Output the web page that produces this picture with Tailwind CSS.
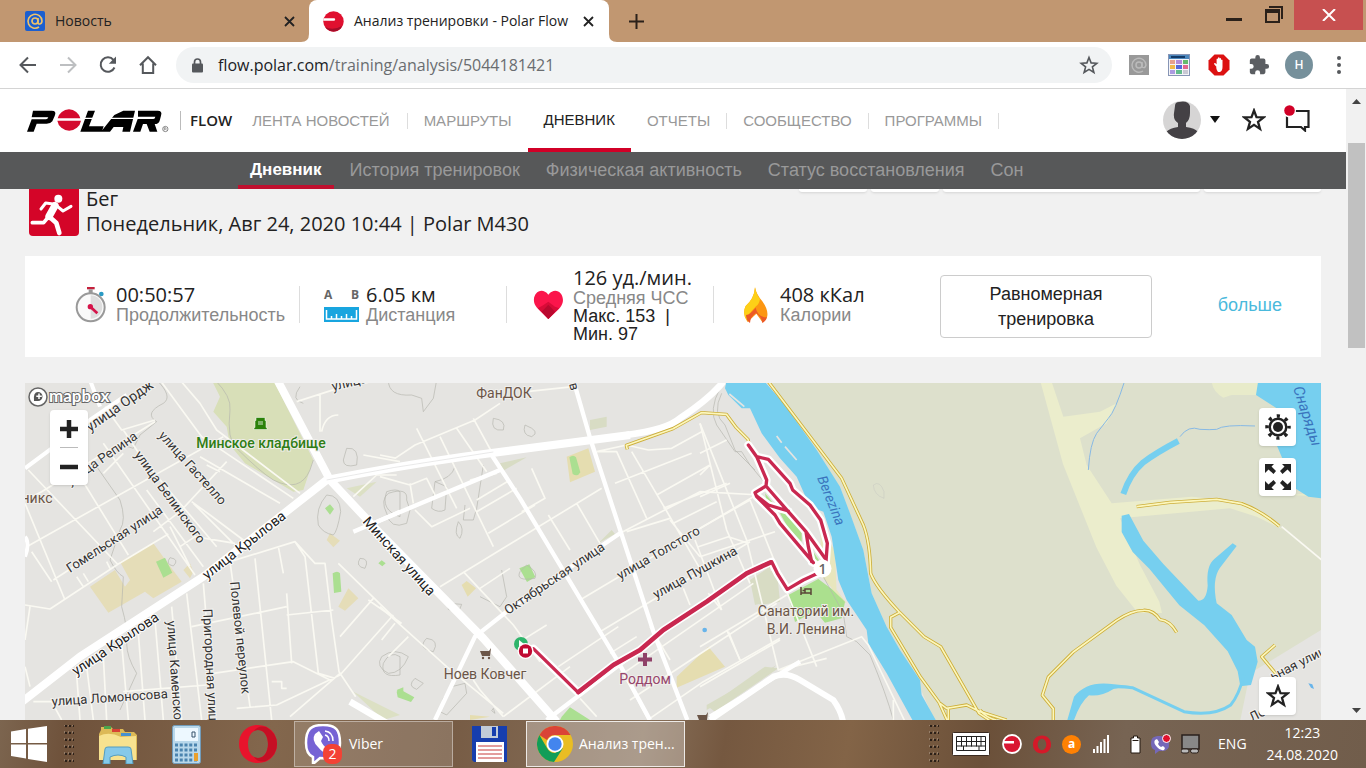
<!DOCTYPE html>
<html lang="ru">
<head>
<meta charset="utf-8">
<title>Анализ тренировки - Polar Flow</title>
<script src="https://cdn.jsdelivr.net/npm/@tailwindcss/browser@4"></script>
</head>
<body class="flex h-screen flex-col overflow-hidden bg-[#f1f1f1] font-['Liberation_Sans',sans-serif] text-[#222]">

<!-- Tab strip -->
<div class="flex h-[42px] shrink-0 items-stretch bg-[#c19771] font-['Open_Sans',sans-serif] text-sm">
  <div class="flex w-[309px] items-center pr-[10px] pl-[25px]">
    <svg class="h-5 w-5" viewBox="0 0 20 20"><rect width="20" height="20" rx="2" fill="#1b5fd0"/><circle cx="10" cy="10" r="3" fill="none" stroke="#eec26a" stroke-width="1.7"/><path d="M13 7v4.500q.3 1.800 1.800 1.500Q17 12.400 17 10A7 7 0 1 0 14 16" fill="none" stroke="#eec26a" stroke-width="1.600"/></svg>
    <span class="ml-[10px] grow">Новость</span>
    <button aria-label="Закрыть вкладку" class="p-1"><svg class="h-[11px] w-[11px]" viewBox="0 0 11 11"><path d="M1 1l9 9M10 1l-9 9" stroke="#222" stroke-width="1.800"/></svg></button>
  </div>
  <div class="relative flex w-[300px] items-center rounded-t-lg bg-white pr-[11px] pl-[14px]">
    <svg class="absolute bottom-0 -left-2 h-2 w-2" viewBox="0 0 8 8"><path d="M8 0v8H0q8 0 8-8z" fill="#fff"/></svg>
    <svg class="absolute -right-2 bottom-0 h-2 w-2" viewBox="0 0 8 8"><path d="M0 0v8h8Q0 8 0 0z" fill="#fff"/></svg>
    <svg class="h-[21px] w-[21px]" viewBox="0 0 21 21"><circle cx="10.500" cy="10.500" r="10.200" fill="#e0102f"/><path d="M2 16Q10 20 19 15L18 17A10 10 0 0 1 3 17z" fill="#a30d29"/><path d="M.5 7.300h11q1.500.8 0 2.400H.4z" fill="#fff"/></svg>
    <span class="ml-[10px] grow whitespace-nowrap">Анализ тренировки - Polar Flow</span>
    <button aria-label="Закрыть вкладку" class="p-1"><svg class="h-[11px] w-[11px]" viewBox="0 0 11 11"><path d="M1 1l9 9M10 1l-9 9" stroke="#222" stroke-width="1.800"/></svg></button>
  </div>
  <button aria-label="Новая вкладка" class="px-5"><svg class="h-[15px] w-[15px]" viewBox="0 0 15 15"><path d="M7.500 0v15M0 7.500h15" stroke="#2b211a" stroke-width="2"/></svg></button>
  <div class="ml-auto flex items-start pr-[3px]">
    <button aria-label="Свернуть" class="h-[30px] px-3"><svg class="h-4 w-4" viewBox="0 0 16 16"><path d="M0 11h16v3H0z" fill="#2b211a"/></svg></button>
    <button aria-label="Восстановить" class="h-[30px] px-[11px]"><svg class="h-[18px] w-[18px]" viewBox="0 0 18 18"><path d="M4 1h13v12" fill="none" stroke="#2b211a" stroke-width="2"/><path d="M1 4h13v12H1z" fill="none" stroke="#2b211a" stroke-width="2"/><path d="M0 3h15v4H0z" fill="#2b211a"/></svg></button>
    <button aria-label="Закрыть" class="flex h-[30px] w-[69px] items-center justify-center bg-[#c75050]"><svg class="h-3 w-[14px]" viewBox="0 0 14 12"><path d="M1 0l12 12M13 0L1 12" stroke="#fff" stroke-width="2"/></svg></button>
  </div>
</div>

<!-- Address bar -->
<div class="flex h-[46px] shrink-0 items-center bg-white pr-[25px] pl-[18px]">
  <button aria-label="Назад" class="mr-5"><svg class="h-5 w-5" viewBox="0 0 20 20"><path d="M18 10H3M10 2.500L2.500 10l7.500 7.500" fill="none" stroke="#55585c" stroke-width="2"/></svg></button>
  <button aria-label="Вперёд" class="mr-5"><svg class="h-5 w-5" viewBox="0 0 20 20"><path d="M2 10h15M10 2.500l7.500 7.500-7.500 7.500" fill="none" stroke="#bdbfc1" stroke-width="2"/></svg></button>
  <button aria-label="Обновить" class="mr-5"><svg class="h-5 w-5" viewBox="0 0 20 20"><path d="M16.500 12.500A7.200 7.200 0 1 1 15.500 5" fill="none" stroke="#55585c" stroke-width="2"/><path d="M18 1.500v7.200h-7.200z" fill="#55585c"/></svg></button>
  <button aria-label="Домой" class="mr-[18px]"><svg class="h-5 w-5" viewBox="0 0 20 20"><path d="M2 10.200l8-8 8 8M4.800 8.500V18h10.400V8.500" fill="none" stroke="#55585c" stroke-width="2"/></svg></button>
  <div class="flex h-9 grow items-center rounded-full bg-[#f1f3f4] pr-[13px] pl-4">
    <svg class="mr-[15px] h-[15px] w-[11px]" viewBox="0 0 11 15"><rect y="5.500" width="11" height="9" rx="1" fill="#55585c"/><path d="M2.500 6V4a3 3 0 0 1 6 0v2" fill="none" stroke="#55585c" stroke-width="1.700"/></svg>
    <div class="grow font-['Open_Sans',sans-serif] text-base text-[#6a6d70]"><span class="text-[#202124]">flow.polar.com</span>/training/analysis/5044181421</div>
    <button aria-label="Добавить в закладки"><svg class="h-5 w-5" viewBox="0 0 20 20"><path d="M10 2.500l2.100 5.400 5.700.4-4.400 3.600 1.500 5.600-4.900-3.100-4.900 3.100 1.500-5.600L2.200 8.300l5.700-.4z" fill="none" stroke="#55585c" stroke-width="1.600"/></svg></button>
  </div>
  <button aria-label="Mail.ru" class="ml-4"><svg class="h-[22px] w-[22px]" viewBox="0 0 22 22"><rect x="1" y="1" width="20" height="20" fill="#999"/><circle cx="11" cy="11" r="3" fill="none" stroke="#bbb" stroke-width="1.500"/><path d="M14 8v5q3 2 4-2A7 7 0 1 0 15 17" fill="none" stroke="#bbb" stroke-width="1.400"/></svg></button>
  <button aria-label="Календарь" class="ml-[18px]"><svg class="h-[22px] w-[22px]" viewBox="0 0 22 22"><rect x=".5" y=".5" width="21" height="21" fill="#f4f4f8" stroke="#8795b5"/><path d="M1 1h20v4H1z" fill="#4b87bd"/><path d="M3 2h14v2H3z" fill="#123a68"/><path d="M2 6h5v4H2z" fill="#e6a08c"/><path d="M8 6h6v4H8z" fill="#b28bd8"/><path d="M15 6h5v4h-5z" fill="#63bc6c"/><path d="M2 11h5v4H2z" fill="#f0b94a"/><path d="M8 11h6v4H8z" fill="#5468d8"/><path d="M15 11h5v4h-5z" fill="#e2678f"/><path d="M2 16h5v4H2z" fill="#ac9ae0"/><path d="M8 16h6v4H8z" fill="#63bc8c"/><path d="M15 16h5v4h-5z" fill="#c9c9d4"/></svg></button>
  <button aria-label="AdBlock" class="ml-[18px]"><svg class="h-[22px] w-[22px]" viewBox="0 0 22 22"><path d="M6.500.5h9l6 6v9l-6 6h-9l-6-6v-9z" fill="#dc1212"/><path d="M9 13.500L6 10q.2-1.500 1.500-.8L8.600 10.300V5q.7-1 1.400 0v4V3.800q.8-1 1.500 0V9V4.500q.8-1 1.500 0V9.500V6q.8-1 1.500 0v7q0 4-2.500 5H10Q8.500 16 8 13z" fill="#fff"/></svg></button>
  <button aria-label="Расширения" class="ml-[18px]"><svg class="h-[22px] w-[22px]" viewBox="0 0 24 24"><path d="M20.500 11H19V7a2 2 0 0 0-2-2h-4V3.500a2.500 2.500 0 0 0-5 0V5H4a2 2 0 0 0-2 2v3.800h1.500a2.700 2.700 0 0 1 0 5.400H2V20a2 2 0 0 0 2 2h3.800v-1.500a2.700 2.700 0 0 1 5.400 0V22H17a2 2 0 0 0 2-2v-4h1.500a2.500 2.500 0 0 0 0-5z" fill="#5b5e62"/></svg></button>
  <button class="ml-[15px] h-7 w-7 rounded-full bg-[#76909b] font-['Open_Sans',sans-serif] text-xs font-semibold text-white">Н</button>
  <button aria-label="Меню" class="ml-6"><svg class="h-[18px] w-1" viewBox="0 0 4 18"><circle cx="2" cy="2" r="2" fill="#55585c"/><circle cx="2" cy="9" r="2" fill="#55585c"/><circle cx="2" cy="16" r="2" fill="#55585c"/></svg></button>
</div>

<!-- Page with its scroll bar -->
<div class="flex min-h-0 grow border-t border-[#d4d4d4]">
 <div class="flex min-w-0 grow flex-col">
  <header class="flex h-[63px] shrink-0 items-center bg-white pl-[27px]">
    <a href="#" aria-label="Polar" class="mr-[10px] shrink-0"><svg class="h-6 w-[143px]" viewBox="0 0 429 72">
      <path d="M18 5H74Q90 5 83 21L76 37Q71 44 59 44H29L20 68H0L14 31H57Q62 31 64 25H14z"/>
      <path d="M183 5h21l-18 47h44l-6 16h-64zM289 5h35l-15 63h-23l3-14h-29l-11 14h-27l40-50zM333 5h59q15 0 10 15l-4 15q-3 10-15 10l8 23h-23l-9-23h-11l-8 23h-22l14-38h47q5 0 6-7h-52z"/>
      <path d="M126 1a36 35 0 0 1 34 27H92A36 35 0 0 1 126 1zM91 35h71a36 36 0 0 1-71 0z" fill="#d40a2d"/>
      <path d="M8 26h52v4H8zM172 26h35v4h-35zM234 26h90v4h-90zM324 26h52v4h-52z" fill="#fff"/>
      <circle cx="415" cy="60" r="8" fill="none" stroke="#555" stroke-width="2"/><path d="M412 64v-8h4q3 2 0 4h-4M416 60l2 4" fill="none" stroke="#555" stroke-width="1.500"/>
    </svg></a>
    <a href="#" class="mr-5 border-l border-[#bbb] pl-[9px] font-['Open_Sans',sans-serif] text-[15px] leading-[19px] font-semibold">FLOW</a>
    <nav class="flex h-full items-center text-[15px] text-[#999]">
      <a href="#" class="pr-[17px] leading-4 whitespace-nowrap">ЛЕНТА НОВОСТЕЙ</a>
      <a href="#" class="border-l border-[#ddd] px-4 leading-4">МАРШРУТЫ</a>
      <a href="#" class="flex h-full items-center border-b-4 border-[#d10027] px-4 pt-1 text-[#222]">ДНЕВНИК</a>
      <a href="#" class="border-r border-[#ddd] px-4 leading-4">ОТЧЕТЫ</a>
      <a href="#" class="px-4 leading-4">СООБЩЕСТВО</a>
      <a href="#" class="border-x border-[#ddd] px-4 leading-4">ПРОГРАММЫ</a>
    </nav>
    <div class="ml-auto flex items-center pr-9 pb-[2px]">
      <button aria-label="Профиль" class="flex items-center"><svg class="h-[38px] w-[38px] rounded-full" viewBox="0 0 38 38"><rect width="38" height="38" fill="#d6d5d5"/><path d="M12 5q0-4 4-4 9-2 11 4v7q0 7-4 10v4q9 1 12 5v7H3v-7q4-4 12-5v-4Q10 19 11 12z" fill="#444145"/></svg><svg class="ml-[9px] h-[7px] w-[10px]" viewBox="0 0 10 7"><path d="M0 0h10L5 7z" fill="#111"/></svg></button>
      <button aria-label="Избранное" class="ml-[22px]"><svg class="h-6 w-6" viewBox="0 0 24 24"><path d="M12 2.500l2.500 6.700 7.200.2-5.700 4.500 2 7-6-4-6 4 2-7L2.300 9.400l7.200-.2z" fill="none" stroke="#222" stroke-width="2.300"/></svg></button>
      <button aria-label="Уведомления" class="ml-[18px] pb-1"><svg class="h-[28px] w-[26px]" viewBox="0 0 26 28"><path d="M3 7h21.500v16H21v3.500L17 23H3z" fill="none" stroke="#222" stroke-width="2.200"/><circle cx="5.500" cy="7" r="6.500" fill="#fff"/><circle cx="5.500" cy="6.500" r="5.300" fill="#d10027"/></svg></button>
    </div>
  </header>
  <nav class="flex h-[37px] shrink-0 items-stretch bg-[#575859] pl-[238px] text-lg leading-8 text-[#999]">
    <a href="#" class="mr-[3px] border-b-4 border-[#c0102f] px-3 pt-[2px] text-[17px] leading-8 font-bold text-white">Дневник</a>
    <a href="#" class="px-[13px] pt-[2px] whitespace-nowrap">История тренировок</a>
    <a href="#" class="px-[13px] pt-[2px] whitespace-nowrap">Физическая активность</a>
    <a href="#" class="px-[13px] pt-[2px] whitespace-nowrap">Статус восстановления</a>
    <a href="#" class="px-[13px] pt-[2px]">Сон</a>
  </nav>
  <main class="flex min-h-0 grow flex-col px-[25px]">
    <div class="flex h-[67px] shrink-0 items-start pl-1">
      <svg class="h-[47px] w-[50px] shrink-0 rounded-b-[4px]" viewBox="0 0 150 141"><rect width="150" height="141" fill="#d40528"/><circle cx="88" cy="29" r="12" fill="#fff"/><g fill="none" stroke="#fff" stroke-linecap="round" stroke-linejoin="round"><path d="M36 60l14-18 28 4 24 20 24-14" stroke-width="9"/><path d="M78 50L60 82" stroke-width="22"/><path d="M62 84l20 18 9 30" stroke-width="14"/><path d="M58 84l-14 17H10" stroke-width="11"/></g></svg>
      <h1 class="-mt-[3px] ml-[7px] font-['Open_Sans',sans-serif] text-xl leading-[25px] whitespace-nowrap">Бег<br>Понедельник, Авг 24, 2020 10:44 | Polar M430</h1>
      <div class="ml-auto flex gap-1">
        <div class="h-[3px] w-[68px] rounded-b bg-white shadow-sm"></div>
        <div class="h-[3px] w-[68px] rounded-b bg-white shadow-sm"></div>
        <div class="h-[3px] w-[257px] rounded-b bg-white shadow-sm"></div>
        <div class="h-[3px] w-[117px] rounded-b bg-white shadow-sm"></div>
      </div>
    </div>
    <section class="flex h-[101px] shrink-0 items-center bg-white pb-1 pl-[50px] text-lg leading-5">
      <div class="flex h-[37px] w-[225px] items-center border-r border-[#ddd]">
        <svg class="h-[38px] w-[32px]" viewBox="0 0 96 114"><path d="M36 3h23v7H36z" fill="#c4213c"/><path d="M41 10h12v12H41z" fill="#999"/><circle cx="79" cy="24" r="7" fill="#2a9ac4"/><circle cx="47" cy="64" r="42" fill="#fafafa" stroke="#999" stroke-width="6"/><path d="M47 28a35 35 0 0 1 0 70z" fill="#dedede"/><circle cx="46" cy="62" r="8" fill="#d5144a"/><path d="M46 62l21 20" stroke="#d5144a" stroke-width="8"/></svg>
        <div class="ml-[9px]"><b class="block font-['Open_Sans',sans-serif] text-xl leading-5 font-medium">00:50:57</b><span class="block text-[#888]">Продолжительность</span></div>
      </div>
      <div class="flex h-[37px] w-[207px] items-center border-r border-[#ddd] pl-6">
        <div class="w-[35px] font-['Open_Sans',sans-serif] text-xs leading-4 font-bold text-[#666]"><div class="flex justify-between"><span>A</span><span>B</span></div><svg class="mt-1 h-[15px] w-[35px]" viewBox="0 0 35 15"><rect width="35" height="15" fill="#18a5df"/><path d="M2.500 3v9h30V3M7.500 12V9m5 3V7m5 5V9m5 3V7m5 5V9" fill="none" stroke="#fff" stroke-width="1.500"/></svg></div>
        <div class="ml-[7px]"><b class="block font-['Open_Sans',sans-serif] text-xl leading-5 font-medium">6.05 км</b><span class="block text-[#888]">Дистанция</span></div>
      </div>
      <div class="flex h-[37px] w-[207px] items-center border-r border-[#ddd] pl-[26px]">
        <svg class="h-[29px] w-[31px] shrink-0" viewBox="0 0 93 87"><path d="M46 87L12 53C-14 24 20-18 46 14 73-18 106 24 81 53z" fill="#fb154b"/><path d="M46 87L14 55l14-8 18-12 20 15 13 5z" fill="#d90b38"/><path d="M46 87L26 65l20-21 20 21z" fill="#b9092f"/></svg>
        <div class="ml-[9px] leading-[18px]"><b class="block font-['Open_Sans',sans-serif] text-xl leading-[22px] font-medium whitespace-nowrap">126 уд./мин.</b><span class="block text-[#888]">Средняя ЧСС</span>Макс. 153 &nbsp;|<br>Мин. 97</div>
      </div>
      <div class="flex h-[37px] w-[226px] items-center pl-[29px]">
        <svg class="h-[36px] w-[27px]" viewBox="0 0 81 108"><path d="M36 1q4 22 22 42 20 28 14 48-4 11-14 14L40 80 14 105Q-4 82 8 57 34 35 36 1z" fill="#fc9612"/><path d="M36 1q4 22 15 35-2 15-12 22-15 14-27 34l2 13Q-4 82 8 57 34 35 36 1z" fill="#fdd017"/><path d="M38 62q-16 20-29 22 0 16 12 24 0-17 18-30 17 12 19 30 10-4 14-17-28 0-34-29z" fill="#ec5a26"/></svg>
        <div class="ml-[10px]"><b class="block font-['Open_Sans',sans-serif] text-xl leading-5 font-medium">408 кКал</b><span class="block text-[#888]">Калории</span></div>
      </div>
      <button class="mt-1 h-[63px] w-[212px] rounded border border-[#ccc] px-10 leading-[25px]">Равномерная тренировка</button>
      <a href="#" class="mr-[39px] ml-auto text-[#4ab9dc]">больше</a>
    </section>

    <section aria-label="Карта" class="relative mt-[26px] min-h-0 grow overflow-hidden bg-[#e5e4e1]">
      <svg class="h-full w-full" viewBox="25 383 1296 337" preserveAspectRatio="xMinYMin slice">
       <g transform="scale(.333333)" fill="none" stroke-linejoin="round">
        <!-- north-west: parks and yards -->
        <g transform="translate(0 1140)">
          <path d="M635 0H820L940 240L910 330L880 335L735 250L690 195L680 140L640 95L660 50z" fill="#d8dfb8"/>
          <path d="M270 620L345 570L375 620L390 600L360 545L460 490L500 545L545 605L460 655L435 635L325 698z" fill="#e5ddb8"/>
          <path d="M468 545l27-12 22 45-27 15zM998 580q15-10 22 0l4 55-22 4zM975 385l15-12 12 14-12 17zM1135 550l10-9 12 9-10 9zM1190 930l20-8v30z" fill="#abdf91"/>
          <path d="M980 480l10-20 30 22-20 20zM1015 680l30-55 30 30-40 37zM550 570l20-20 10 25-10 20z" fill="#e5ddb8"/>
          <path d="M1040 325l90-20-50 45zM1060 935l140 70-50 15z" fill="#dce0c4"/>
        </g>
        <g transform="translate(1140 1140)">
          <path d="M560 230l65-25 20 70-75 32zM890 890l95-90 50 60-145 63zM245 615l15-12 28 22-25 25zM270 1005l60 5-60 10z" fill="#e5ddb0"/>
          <path d="M568 232q12-10 20 0l13 45q-8 15-23 5zM418 565l30-12 18 38-25 15zM50 935l8-8 45 25-10 14-40-14zM545 1010l25-28 60 38h-90z" fill="#abdf91"/>
          <path d="M360 250l80-18-70 40zM655 490l40-40 10 12zM1110 605l80-40 10 100-60 10zM985 980l170-120 40 5-190 130zM630 120l50-10v30l-50 10z" fill="#d8dcc4"/>
        </g>
        <!-- river and the eastern bank -->
        <g transform="translate(2100 1140)">
          <path d="M205 0L1863 0V1025H705L650 900L560 740L515 640L490 510L420 320L330 200z" fill="#dde0cc"/>
          <path d="M360 430l45 85 5 125-45-50zM380 590l60 80-30-10z" fill="#e8e6bd"/>
          <path d="M265 645l90-48 40 30 40 38-10 50-50 13-30-35-60 33z" fill="#abe08e"/>
          <path d="M195 340l25 30-20-5zM240 400q20-5 30 10l35 50v25l-40-40zM340 515l20 30-15-5z" fill="#abe08e"/>
          <path d="M150 600l60-40 15 100-60 15zM20 975l210-120-40 35-170 100z" fill="#d8dcc4"/>
          <path d="M80 0H190L255 75L350 210L420 320L450 400L490 510L515 640L560 740L600 810L660 900L665 945L710 1025H640L560 880L505 790L500 750L440 660L415 600L395 470L370 395L330 380L290 290L240 235L185 160L150 85L125 85L85 45L75 25z" fill="#76cfef"/>
          <path d="M88 42l45 38M230 168l15 20M255 200l35 40" stroke="#e5e4e1" stroke-width="5"/>
          <circle cx="14" cy="750" r="7" fill="#68b4ea"/>
          <path d="M520 315q20-15 32 20v20q-30-10-32-40z" stroke="#bbb"/>
        </g>
        <g transform="translate(2940 1140)">
          <path d="M180 0h33l37 110 110-15 50-25-30 60-80 45 20 80 75 115 240-20 155 15 60 40 60 45-80-40-80-25-330 30 60 140 58 110 8 34h-72l-65-82-60-115-100-250z" fill="#ebedcc"/>
          <path d="M695 0h140v45h-80l-25 8q-35-20-35-53zM935 345l88-10v15z" fill="#e8ebca"/>
          <path d="M835 0h190v355l-40-5-40-25-55-130v-110l-62-40z" fill="#76cfef"/>
          <path d="M1023 750L810 880 780 1025h243z" fill="#e5e4e1"/>
          <path d="M325 270q5-80 25-110l35-45q20-20 50-115M600 170q25-35 60-22 30 2 50 0 20-15 115-10" stroke="#87b9e5" stroke-width="3"/>
          <path d="M430 342q20-60 60-95 40-30 105-64" stroke="#76cfef" stroke-width="18"/>
          <path d="M425 407l22-5 43 80 60 70 105 110q25 0 28-45-5-60 20-80l55-47 12 8-50 65q-25 35-10 107l45 35 45 75 25 20 8 45-20 70-32 4-8-45-30-60-70-78-75-60-90-110-50-50-33-60z" fill="#76cfef"/>
          <path d="M792 885q-15 60-40 90-50 35-140 20l-155-72q-100-10-145 22-30 30-40 75" stroke="#76cfef" stroke-width="9"/>
          <path d="M262 1020l20-70q40-50 120-37l50 5-50 8q-40 25-75 20-25 20-45 74z" fill="#76cfef"/>
          <path d="M985 910l12 3 5 14-9-4z" fill="#68b4ea"/>
        </g>

        <!-- thin outlines -->
        <g stroke="#b5b5ae" stroke-width="2">
          <path transform="translate(0 1140)" d="M470 0q50 50 20 70-60 30-20 55l-50 40-20 40-50-15M645 0q50 50 45 90-10 90 20 115 70 70 110 95 80 40 110-30l10-30M290 260l70 100q20 60 0 90l-30 90q20 40 40 50l-5 90q20 70 15 110 0 40 30 90l-50 110M980 345q40 0 42 50-10 60-22 70-30-5-45-30-10-50 25-90zM1040 205q40-5 30 50-40 10-40-15zM1080 535q30 0 15 30-30-5-15-30zM900 20q-30 40 10 50M510 533q30 5 10 25-25-5-10-25zM1160 335q30-10 40 0v75q-60-20-40-75zM1150 850q20-40 50-20v55q-60 10-50-35z"/>
          <path transform="translate(1140 1140)" d="M25 0q0 50 70 45l30 10 5 40 30-40 10-55M340 115q40 5 30 35-40 5-30-35zM435 135q50 20 20 35-30-5-20-35zM25 340q60-20 55 20l10 30-10 40q-50 20-60-30-20-40 5-60zM165 305q50-10 60-45M165 305l35 15-5 70q-20 10-40-5zM310 255l-20 130-10 35h-30l5-45M235 425q20 20 5 50-20-10-5-50zM440 555q35 20 25 40-60 10-45-20zM365 570l15 80-20 30-60-30M5 830q40-30 80 0-20 50-60 50-40-20-20-50zM140 775q40 5 20 40-50-10-20-40zM205 670l40 3-10 25-30-10zM215 920l40-10 5 30-60 65-20-10 10-40zM105 895l25 15-20 18q-30-10-5-33zM340 985l5 15-10-8zM1025 40q-30 60 10 95l30 75 60 60"/>
          <path transform="translate(2100 1140)" d="M60 25q-35 65-10 110l55 80h20l25 40 50 60M370 590l60 110 10 70 30 15 40 40q50 120 70 195"/>
        </g>

        <!-- minor streets -->
        <g stroke="#faf9f2" stroke-width="5">
          <path transform="translate(0 1140)" d="M315 80l50 70 100-30M480 0l125 170 275 185M540 0l60 70 50 80 250 190M465 125l-340 210-50 25M80 500l590-330M160 600l200-130M75 675l75 12 205-135 150-90M85 270l270 285M200 225l185 300M310 190l275 395M370 150l60 90 220 260M75 370l120 290M95 515l60 90M600 230l240 140M620 255l40 20M680 245l-140 150-80 60M580 370l120 120M440 330l170 230M540 500l45-30 120 20M575 365l55 40 120 90M230 590l20 30M250 580l15 25M320 545l10 20M90 680l-15 100M75 860l15 60M690 545l195-60 60 65h30l20 170 22 155 50 75M885 485l30 45 40 350 50 15M690 545l60 435M765 535l50 485M835 500l15 80M860 640l15 210M610 610l15 180M560 640l45 380M515 680l30 340M465 720l25 300M415 760l20 260M365 790l20 230M310 830l10 190M260 860l20 160M230 885l10 135M575 740l285-60M860 705l140-15M640 880l240-35 110 55M710 985l120-10 190-90 160-180M100 965h55l30 55M1015 550l185 180M1020 770l100-115M1105 660l100 70M890 65l170-55M960 40v115M965 155q10-50 50-50M1090 225l110 20M1060 350l70-65h60M870 1010l150-130M815 905h30v20h15M370 935l250-20M510 440l60 120M370 220l-60 60"/>
          <path transform="translate(1140 1140)" d="M45 235l60-40 180-75 75-50M440 35l140-15M110 145l120 240M180 170l160 330M230 145l90 130M280 115l60 110M0 290l90 25 50-20 30 60M90 310l10 60M0 225l50 10M105 390l50 50 115-55M270 300l80-20M290 360l100-60M290 395l120-70M325 460l140-85M180 620l485-295M455 265l40 90-70 40M505 405l65 105M590 370l70 120M650 215h60l90 200M650 215l90-20 65 15 70-5 90-50M755 215l100 170 110 190M705 310l230-90M830 345l160-90M850 385l190-75M880 430l130-65M960 130l80 320 70 160M720 460l240-125 180 10M740 455l130-40M600 660l520-310M955 500l90-30 60 20M660 755l450-270M690 820l80-50M535 860l180-120M370 1010l200-150M250 575l150 160 80 110M300 625l90-60M945 480l80 210M910 625l20 50M1000 635l25 55M1040 750l40 90M870 420l90 110M0 680l200 180 170 140M45 730l-40 50M85 770l-60 60M750 910l-20-30 390-270M750 960l440-290M810 1015l160-110 230-130M280 900l20 30 70 80M600 955l50 55M715 850l90 170M810 740l60 100M500 735l-80 50"/>
          <path transform="translate(2100 1140)" d="M0 130l140 350 95 390 250-100 20 25 110 230M150 360l200 500M0 220l80-40M0 285l25-25M0 350l90-40M0 445l150-85M0 530l225-75M0 800l260-155M0 920l240-140M85 755l35 85M240 870l140-35M580 1020V960M25 640l40 50"/>
          <path transform="translate(2940 1140)" d="M905 440l120 100"/>
        </g>

        <!-- main roads -->
        <g stroke="#fff">
          <g stroke-width="18">
            <path transform="translate(0 1140)" d="M75 265L270 120l110-75M270 0l30 80M1120 430l80-35M75 470q15 20 0 60" stroke-width="12"/>
            <path transform="translate(0 1140)" d="M60 970l180-140 370-240L980 300" stroke-width="24"/>
            <path transform="translate(0 1140)" d="M832 0L990 300l150 160 310 315 220 250" stroke-width="24"/>
            <path transform="translate(0 1140)" d="M980 300q200-40 410-70l500-65" stroke-width="24"/>
            <path transform="translate(1140 1140)" d="M740 165q120-15 160-50 90-60 130-110" stroke-width="20"/>
            <path transform="translate(1140 1140)" d="M-80 455L360 270M580 0l52 180 190 580 100 260M335 225l85 130 300 500 90 165M165 1020l120-250 120-95 315-215M500 1020l250-190M990 1010l270-165" stroke-width="13"/>
            <path transform="translate(0 1140)" d="M1050 965l120 70" stroke-width="20"/>
            <path transform="translate(2100 1140)" d="M30 1020l190-130q40-15 80 10l100 60q25 35 30 70" stroke-width="18"/>
          </g>
          <path transform="translate(0 1140)" d="M980 300q200-40 410-70l90-14" stroke="#dedede" stroke-width="2"/>
        </g>

        <!-- tracks -->
        <g stroke="#cdae39" stroke-width="10">
          <path id="t1" transform="translate(1140 1140)" d="M742 208l-3-12 140-50 85-48 75 5 30 40 35 35 5 20"/>
          <path id="t2" transform="translate(2100 1140)" d="M205 5l220 290 65 140q20 50 22 145 15 40 85 115l75 75 50 30 115 200 30 20M205 5l10-10M600 697l-28 15v30l90 150 55 75 25 55M720 970l20 15 60-10 40 20 80 25M745 985v35"/>
          <path id="t3" transform="translate(2940 1140)" d="M470 380l100-13 140-9 75 13q60 22 113 68M590 757q-20-35-50-38-20-30-50-28-35 0-80 30l-130 95-75 75-18 55 33 40v35M885 795l-40 35 50 60M0 990q20 25 50 30"/>
        </g>
        <g stroke="#fcf7bd" stroke-width="5">
          <path transform="translate(1140 1140)" d="M742 208l-3-12 140-50 85-48 75 5 30 40 35 35 5 20"/>
          <path transform="translate(2100 1140)" d="M205 5l220 290 65 140q20 50 22 145 15 40 85 115l75 75 50 30 115 200 30 20M205 5l10-10M600 697l-28 15v30l90 150 55 75 25 55M720 970l20 15 60-10 40 20 80 25M745 985v35"/>
          <path transform="translate(2940 1140)" d="M470 380l100-13 140-9 75 13q60 22 113 68M590 757q-20-35-50-38-20-30-50-28-35 0-80 30l-130 95-75 75-18 55 33 40v35M885 795l-40 35 50 60M0 990q20 25 50 30"/>
        </g>
       </g>

       <!-- street labels -->
       <g class="font-['Roboto',sans-serif] text-[13px]" fill="#333" stroke="#f3f2ef" stroke-width="2" paint-order="stroke">
        <text transform="translate(90 432) rotate(-35)" class="text-sm">улица Ордж</text>
        <text transform="translate(70 486) rotate(-35)">улица Репина</text>
        <text transform="translate(158 436) rotate(48)">улица Гастелло</text>
        <text transform="translate(134 455) rotate(54)">улица Белинского</text>
        <text transform="translate(70 573) rotate(-33)">Гомельская улица</text>
        <text transform="translate(52 706) rotate(-4)">улица Ломоносова</text>
        <text transform="translate(167 621) rotate(86)">улица Каменского</text>
        <text transform="translate(203 609) rotate(87)">Пригородная улица</text>
        <text transform="translate(230 582) rotate(84)">Полевой переулок</text>
        <text transform="translate(508 615) rotate(-34)">Октябрьская улица</text>
        <text transform="translate(620 580) rotate(-30)">улица Толстого</text>
        <text transform="translate(656 599) rotate(-29)">улица Пушкина</text>
        <text transform="translate(333 391) rotate(-14)">улица</text>
        <text transform="translate(569 384) rotate(75)">в</text>
        <text transform="translate(1273 681) rotate(-27)">ьная улиц</text>
        <text transform="translate(1252 722) rotate(-27)">Летн</text>
       </g>
       <g class="font-['Roboto',sans-serif] text-[14px]" fill="#222" stroke="#fff" stroke-width="2" paint-order="stroke">
        <text transform="translate(207 580) rotate(-38)">улица Крылова</text>
        <text transform="translate(76 676) rotate(-34)">улица Крылова</text>
        <text transform="translate(362 522) rotate(48)">Минская улица</text>
       </g>
       <!-- places -->
       <g class="font-['Roboto',sans-serif] text-[14px]" fill="#6b5547" stroke="#efeeeb" stroke-width="2" paint-order="stroke" text-anchor="middle">
        <text x="261" y="448" fill="#2f7d14" class="font-medium">Минское кладбище</text>
        <text x="37" y="503">никс</text>
        <text x="504" y="398">ФанДОК</text>
        <text x="485" y="679">Ноев Ковчег</text>
        <text x="645" y="684" fill="#97456b">Роддом</text>
        <text x="806" y="616">Санаторий им.</text>
        <text x="806" y="634">В.И. Ленина</text>
       </g>
       <g class="font-['Roboto',sans-serif] text-sm italic" fill="#3a74bd">
        <text transform="translate(817 478) rotate(68)">Berezina</text>
        <text transform="translate(1293 388) rotate(72)" class="text-[15px]">Снаряды</text>
       </g>
       <!-- place icons -->
       <path d="M256 417.500h9v3h1v7h1v2h-13v-2h1v-7h1z" fill="#2a8109" stroke="#fff" stroke-width=".5"/><path d="M258 422h5M258 424h5" stroke="#fff" stroke-width=".8"/>
       <g fill="#6b5547"><path d="M480 651h9l2-3-1 8h-8z"/><circle cx="483" cy="658" r="1.200"/><circle cx="489" cy="658" r="1.200"/></g>
       <g fill="#6b5547" transform="translate(217 64)"><path d="M480 651h9l2-3-1 8h-8z"/><circle cx="483" cy="658" r="1.200"/><circle cx="489" cy="658" r="1.200"/></g>
       <path d="M645 653v13M638 659.500h14" stroke="#8f4168" stroke-width="4"/>
       <path d="M801 587v8M801 593h10M811 595v-6h-6v4M802.500 590.500h2" fill="none" stroke="#5b4638" stroke-width="1.500"/>

       <!-- recorded route: white casing below, red line above -->
       <g transform="scale(.333333) translate(2100 1140)" fill="none" stroke-linejoin="round" stroke-linecap="round">
        <path d="M-500 806L-365 938-260 855-180 810-110 750 20 665 140 580 215 545 232 580 262 628 310 600 360 577M145 195L170 230 200 300 198 318 165 338 170 350 225 405 240 430 340 548M170 230L205 238 270 310 278 330 330 375 362 420 382 490 378 545M198 318L265 395 318 455 375 535M170 348L205 375 265 393M318 455L325 500 335 545" stroke="#fff" stroke-width="24"/>
        <path d="M-500 806L-365 938-260 855-180 810-110 750 20 665 140 580 215 545 232 580 262 628 310 600 360 577M145 195L170 230 200 300 198 318 165 338 170 350 225 405 240 430 340 548M170 230L205 238 270 310 278 330 330 375 362 420 382 490 378 545M198 318L265 395 318 455 375 535M170 348L205 375 265 393M318 455L325 500 335 545" stroke="#c92850" stroke-width="10"/>
        <path d="M-365 936L-260 855-180 810-110 750 20 665 140 580 212 547" stroke="#c92850" stroke-width="14"/>
       </g>
       <circle cx="521" cy="644" r="7" fill="#2fb46b"/><path d="M519 640l5 4-5 4z" fill="#fff"/>
       <circle cx="525.500" cy="651" r="8" fill="#fff"/><circle cx="525.500" cy="651" r="6.700" fill="#c00a33"/><rect x="523" y="648.500" width="5" height="5" fill="#fff"/>
       <circle cx="822.500" cy="568.500" r="9" fill="#fff"/><text x="822.500" y="573.500" text-anchor="middle" fill="#666" class="font-['Open_Sans',sans-serif] text-sm font-semibold">1</text>
       <!-- map logo -->
       <circle cx="38" cy="397" r="9" fill="#fff" stroke="#666" stroke-width="1.500"/><path d="M34 401q-1-9 4-9a4.500 4.500 0 1 1 0 9z" fill="#555"/><path d="M39 393.500v5.500M36.300 396.200h5.500" stroke="#fff" stroke-width="1.500"/>
       <text x="49" y="402" class="font-['Lato',sans-serif] text-[17px] font-bold" fill="#fff" stroke="#666" stroke-width="2" paint-order="stroke">mapbox</text>
      </svg>
      <div class="absolute top-[27px] left-[25px] flex h-[75px] w-[38px] flex-col divide-y divide-[#bbb] rounded bg-white px-[10px] shadow">
        <button aria-label="Приблизить" class="flex grow items-center justify-center"><svg class="h-[18px] w-[18px]" viewBox="0 0 18 18"><path d="M9 0v18M0 9h18" stroke="#222" stroke-width="4.500"/></svg></button>
        <button aria-label="Отдалить" class="flex grow items-center justify-center"><svg class="h-[18px] w-[18px]" viewBox="0 0 18 18"><path d="M0 9h18" stroke="#222" stroke-width="4.500"/></svg></button>
      </div>
      <div class="absolute top-[25px] right-[25px] flex flex-col gap-3">
        <button aria-label="Настройки" class="flex h-[38px] w-[37px] items-center justify-center rounded bg-white shadow"><svg class="h-[26px] w-[26px]" viewBox="0 0 26 26"><circle cx="13" cy="13" r="11" fill="none" stroke="#222" stroke-width="3.500" stroke-dasharray="3.200 5.440" stroke-dashoffset="1.600"/><circle cx="13" cy="13" r="8.300" fill="#fff" stroke="#222" stroke-width="2.500"/><circle cx="13" cy="13" r="5" fill="#222"/></svg></button>
        <button aria-label="Во весь экран" class="flex h-[38px] w-[37px] items-center justify-center rounded bg-white shadow"><svg class="h-[26px] w-[26px]" viewBox="0 0 26 26"><path d="M0 0h9L6.500 2.500l4.500 4.500L8.500 10 3.500 5.500 0 9zM26 0v9l-3.500-3.500-5 4.500L15 7l4.500-4.500L17 0zM0 26v-9l3.500 3.500 5-4.500L11 19l-4.500 4.500L9 26zM26 26h-9l2.500-2.500L15 19l2.500-3 5 4.500L26 17z" fill="#222"/></svg></button>
      </div>
      <button aria-label="Избранное" class="absolute right-[25px] bottom-[5px] flex h-[38px] w-[37px] items-center justify-center rounded bg-white shadow"><svg class="h-6 w-6" viewBox="0 0 24 24"><path d="M12 2.500l2.500 6.700 7.200.2-5.700 4.500 2 7-6-4-6 4 2-7L2.300 9.400l7.200-.2z" fill="none" stroke="#222" stroke-width="2.300"/></svg></button>
    </section>
  </main>
 </div>
 <div class="flex w-5 shrink-0 flex-col items-center bg-[#f1f1f1] pt-[10px] pb-[7px]">
   <svg class="h-[5px] w-[9px]" viewBox="0 0 9 5"><path d="M0 5h9L4.500 0z" fill="#444"/></svg>
   <div class="mt-[39px] h-[205px] w-[17px] bg-[#c1c1c1]"></div>
   <svg class="mt-auto h-[5px] w-[9px]" viewBox="0 0 9 5"><path d="M0 0h9L4.500 5z" fill="#444"/></svg>
 </div>
</div>

<!-- Taskbar -->
<footer class="flex h-12 shrink-0 items-center bg-[linear-gradient(100deg,#7c654f_0%,#6f523b_5%,#83674d_20%,#775c45_33%,#87705a_47%,#755840_53%,#836447_62%,#6b5039_72%,#776453_82%,#715d4b_100%)] font-['Open_Sans',sans-serif] text-sm text-white">
  <button aria-label="Пуск" class="flex h-full w-[58px] items-center justify-center"><svg class="h-9 w-9" viewBox="0 0 36 36"><path d="M0 5.500L15 3v14H0zM17 2.700L36 0v17H17zM0 18.500h15v14L0 30zM17 18.500h19V36l-19-3z" fill="#fff"/></svg></button>
  <svg class="ml-[6px] h-[38px] w-[11px]" viewBox="0 0 11 38"><path d="M1 1h9M1 8h9M1 15h9M1 22h9M1 29h9M1 36h9" stroke="#2c2018" stroke-width="2" stroke-dasharray="2 2"/><path d="M0 0h9M0 7h9M0 14h9M0 21h9M0 28h9M0 35h9" stroke="#b7a696" stroke-dasharray="1 3"/></svg>
  <button aria-label="Проводник" class="ml-[23px]"><svg class="h-10 w-10" viewBox="0 0 40 40"><path d="M3 6V3h10l2 2h10l2 3h9l3 3v25H1V10z" fill="#dcb956"/><path d="M6 2h7v3H6z" fill="#4ba54d"/><path d="M14 5h8v3h-8z" fill="#d84234"/><path d="M23 9h10v3H23z" fill="#4691cf"/><path d="M1 12q10-5 22 1l15-1v24H1z" fill="#f7e28f"/><path d="M5 40l2-15q0-2 3-2h20q3 0 3 2l2 15h-7v-7q-8-4-16 0v7z" fill="#85c9e9" stroke="#549dbf"/></svg></button>
  <button aria-label="Калькулятор" class="ml-[34px]"><svg class="h-[39px] w-[29px]" viewBox="0 0 29 39"><rect x=".5" y=".5" width="28" height="38" rx="2" fill="#b9d8eb" stroke="#719cbb"/><path d="M3 3h23v13H3z" fill="#edf8ff"/><path d="M20 7h3v5h-3z" fill="none" stroke="#36536a"/><path d="M3 20h22M3 25h22M3 30h22M3 35h22" stroke="#4b84af" stroke-width="3" stroke-dasharray="3 1.750"/><path d="M22 28h4v8h-4z" fill="#e9a02d"/></svg></button>
  <button aria-label="Opera" class="ml-[37px]"><svg class="h-10 w-10" viewBox="0 0 40 40"><path d="M20 1C8 1 1 10 1 20s7 19 19 19 19-9 19-19S32 1 20 1zm0 5c6 0 10 6 10 14s-4 14-10 14-10-6-10-14S14 6 20 6z" fill="#e8142c" fill-rule="evenodd"/><path d="M28 3q11 6 11 17T28 37Q20 39 16 33q3 1 4 1c6 0 10-6 10-14S26 6 20 6q-2 0-4 1 4-6 12-4z" fill="#c50f24"/></svg></button>
  <button class="ml-[16px] flex h-[46px] w-[159px] items-center border border-white/40 bg-white/15 pl-2"><svg class="h-10 w-10" viewBox="0 0 40 40"><path d="M20 1C8 1 3 5 3 19c0 7 2 12 7 14v7l7-6c15 1 20-3 20-15S34 1 20 1z" fill="#7663d4" stroke="#fff" stroke-width="2.500"/><path d="M12 10l4-3 4 6-2 4q2 5 6 7l3-3 6 4-3 5q-8 2-15-7-7-7-3-13z" fill="#fff"/><path d="M22 7q8 1 8 10M22 11q4 1 4 6" fill="none" stroke="#fff" stroke-width="1.500"/><rect x="20" y="20" width="19" height="20" rx="8" fill="#f34235"/><text x="29.500" y="35" text-anchor="middle" fill="#fff" class="text-sm">2</text></svg><span class="ml-[6px]">Viber</span></button>
  <button aria-label="Сохранить" class="ml-[18px]"><svg class="h-[38px] w-[37px]" viewBox="0 0 37 38"><path d="M1 1h35v36H3l-2-2z" fill="#173eae"/><path d="M10 1h17v12H10z" fill="#c2cbd7"/><path d="M21 2h4v9h-4z" fill="#173eae"/><path d="M5 17h28v20H5z" fill="#fff"/><path d="M7 21h24M7 25h24M7 29h24M7 33h24" stroke="#c63b3a"/></svg></button>
  <button class="ml-[18px] flex h-[46px] w-[159px] items-center border border-white/80 bg-white/30 pl-[10px]"><svg class="h-9 w-9" viewBox="0 0 36 36"><circle cx="18" cy="18" r="18" fill="#e9bd23"/><path d="M2.400 9A18 18 0 0 1 33.600 9H18a9 9 0 0 0-8 5z" fill="#da4437"/><path d="M2.400 9A18 18 0 0 0 17 36l9-14-8 5a9 9 0 0 1-8-5z" fill="#119d58"/><circle cx="18" cy="18" r="8.500" fill="#fff"/><circle cx="18" cy="18" r="6.700" fill="#4385ee"/></svg><span class="ml-[6px]">Анализ трен...</span></button>
  <div class="ml-auto flex items-center pr-[28px]">
    <svg class="h-[38px] w-[11px]" viewBox="0 0 11 38"><path d="M1 1h9M1 8h9M1 15h9M1 22h9M1 29h9M1 36h9" stroke="#2c2018" stroke-width="2" stroke-dasharray="2 2"/><path d="M0 0h9M0 7h9M0 14h9M0 21h9M0 28h9M0 35h9" stroke="#b7a696" stroke-dasharray="1 3"/></svg>
    <svg class="ml-3 h-6 w-[38px]" viewBox="0 0 38 24"><rect x=".5" y=".5" width="37" height="23" rx="1" fill="#fff" stroke="#3a2a20"/><path d="M4.500 4.500h29v14h-29zM4.500 9.500h29M4.500 14h29M9.500 4.500v10M14.500 4.500v10M19.500 4.500v10M24.500 4.500v10M29 4.500v10M11.500 14v5M27 14v5" fill="none" stroke="#222"/></svg>
    <svg class="ml-3 h-5 w-5" viewBox="0 0 20 20"><circle cx="10" cy="10" r="9" fill="#d91732" stroke="#fff" stroke-width="1.800"/><path d="M2 7h10v2.500H2z" fill="#fff"/></svg>
    <svg class="ml-[10px] h-[19px] w-5" viewBox="0 0 40 40"><path d="M20 1C8 1 1 10 1 20s7 19 19 19 19-9 19-19S32 1 20 1zm0 7c5 0 9 5 9 12s-4 12-9 12-9-5-9-12 4-12 9-12z" fill="#d41929" fill-rule="evenodd"/></svg>
    <svg class="ml-[10px] h-[19px] w-[19px]" viewBox="0 0 19 19"><circle cx="9.500" cy="9.500" r="9.500" fill="#ff8103"/><text x="9.500" y="13" text-anchor="middle" fill="#fff" class="text-xs font-bold">a</text></svg>
    <svg class="ml-3 h-[18px] w-4" viewBox="0 0 16 18"><path d="M0 14h2v4H0zM3.500 11h2v7h-2zM7 7h2v11H7zM10.500 4h2v14h-2zM14 0h2v18h-2z" fill="#fff"/></svg>
    <svg class="ml-[21px] h-[19px] w-[11px]" viewBox="0 0 11 19"><path d="M3.500 1h4v2H10v15H1V3h2.500z" fill="#fff" stroke="#221811"/><path d="M2.500 5.500h6" stroke="#221811"/></svg>
    <svg class="ml-[10px] h-5 w-5" viewBox="0 0 20 20"><path d="M9 2C2 2 0 4 0 10q0 5 4 6v4l4-3q11 1 10-7 0-8-9-8z" fill="#7568b8"/><path d="M4 6l2-1 2 3-1 2q1 2 3 3l2-1 2 2-1 2q-4 1-7-3-4-4-2-7z" fill="#fff"/><circle cx="15.500" cy="4.500" r="4" fill="#e0112d" stroke="#fff"/></svg>
    <svg class="ml-[10px] h-5 w-[19px]" viewBox="0 0 19 20"><path d="M1 1h17v14H1z" fill="#888" stroke="#2a211c" stroke-width="1.500"/><rect y="15" width="8" height="4" rx="2" fill="#bbb" stroke="#2a211c"/><rect x="9.500" y="15" width="8" height="4" rx="2" fill="#bbb" stroke="#2a211c"/></svg>
    <span class="ml-[18px]">ENG</span>
    <time class="ml-5 text-center leading-[22px]">12:23<br>24.08.2020</time>
  </div>
</footer>
</body>
</html>
